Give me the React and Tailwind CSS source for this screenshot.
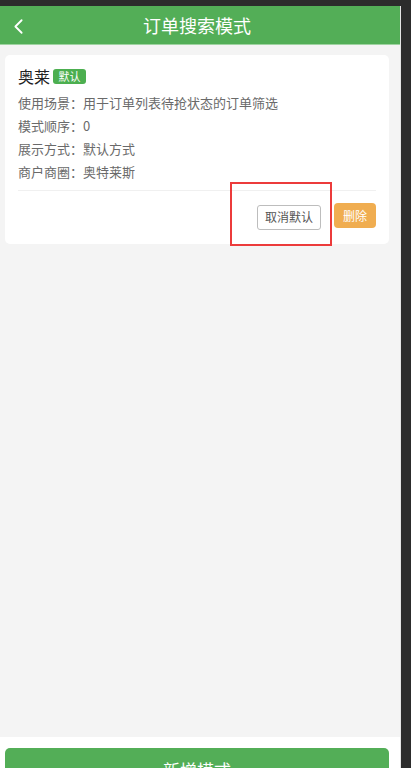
import { ChevronLeft } from 'lucide-react';

const rows = [
  ['使用场景', '用于订单列表待抢状态的订单筛选'],
  ['模式顺序', '0'],
  ['展示方式', '默认方式'],
  ['商户商圈', '奥特莱斯'],
];

export default function App() {
  return (
    <div
      className="h-screen overflow-hidden bg-[#2c2c2c] pt-[6px]"
      style={{ fontFamily: '"Noto Sans CJK SC", "Noto Sans", sans-serif' }}
    >
      <div className="w-[401px] h-[762px] flex flex-col bg-[#f4f4f4] border-r border-[#e4e4e4] overflow-hidden">
        {/* Header */}
        <div className="relative h-[39px] shrink-0 flex items-center justify-center bg-[#53ae57] border-b border-[#9fd3a1]">
          <ChevronLeft className="absolute left-[6px] top-[8px] h-[25px] w-[25px] text-white" strokeWidth={1.75} />
          <span className="text-[18px] text-white pr-[6px]">订单搜索模式</span>
        </div>

        {/* List */}
        <div className="flex-1 pl-[5px] pr-[11px] pt-[10px]">
          <div className="bg-white rounded-[5px] px-[13px] pt-[10px] pb-[14px]">
            <div className="flex items-center h-[22px]">
              <span className="text-[16px] text-[#222]">奥莱</span>
              <span className="ml-[3px] h-[15px] w-[33px] flex items-center justify-center rounded-[3px] bg-[#4caf50] text-[11px] text-white leading-none">
                默认
              </span>
            </div>
            <div className="mt-[4px]">
              {rows.map(([k, v]) => (
                <div key={k} className="h-[23px] flex items-center text-[13px] text-[#6a6a6a]">
                  {k}：{v}
                </div>
              ))}
            </div>
            <div className="mt-[7px] border-t border-[#f0f0f0]" />
            <div className="mt-[12px] flex justify-end gap-[13px]">
              <div className="relative">
                <button className="h-[25px] w-[64px] rounded-[3px] border border-[#bdbdbd] bg-white text-[12px] text-[#555]">
                  取消默认
                </button>
                <div className="absolute left-[-27px] top-[-21px] w-[102px] h-[64px] border-2 border-[#ec3b3b]" />
              </div>
              <button className="h-[25px] w-[42px] rounded-[4px] bg-[#f0ad50] text-[12px] text-white">
                删除
              </button>
            </div>
          </div>
        </div>

        {/* Footer */}
        <div className="h-[31px] shrink-0 overflow-hidden bg-white pl-[5px] pr-[11px] pt-[11px]">
          <div className="h-[44px] rounded-[5px] bg-[#53ae57] flex items-center justify-center text-[17px] text-white">
            新增模式
          </div>
        </div>
      </div>
    </div>
  );
}
